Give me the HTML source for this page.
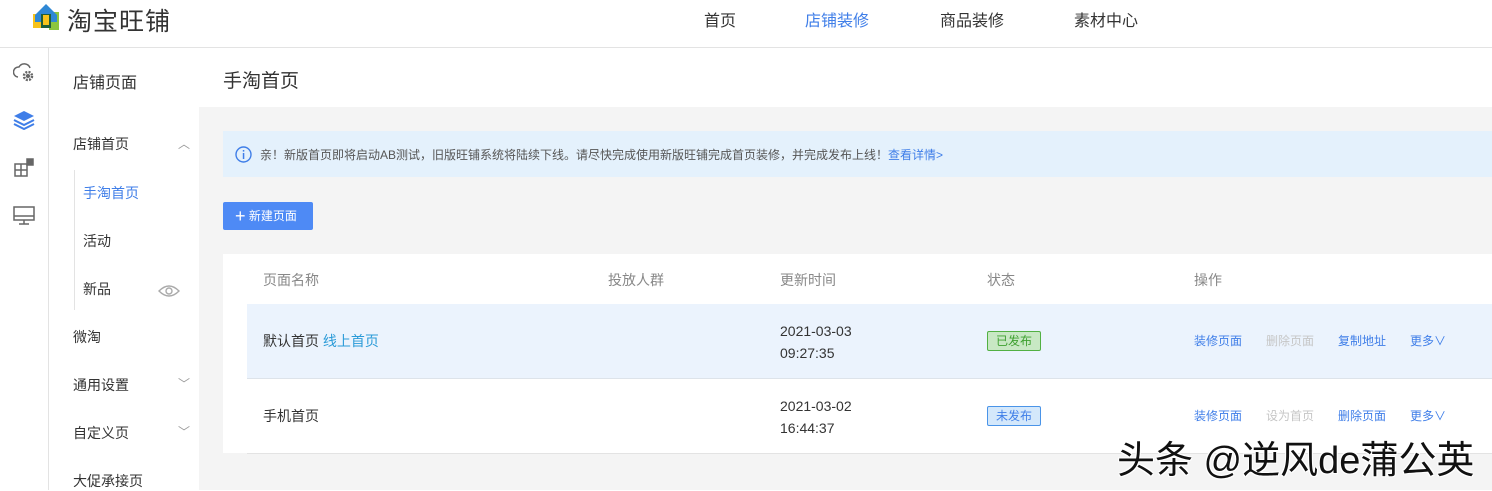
<!DOCTYPE html><html><head><meta charset="utf-8"><style>
*{margin:0;padding:0;box-sizing:border-box}
body{width:1492px;height:490px;overflow:hidden;background:#fff;font-family:"Liberation Sans","Noto Sans CJK SC",sans-serif;color:#333;position:relative;font-size:14px}
.a{position:absolute;white-space:nowrap}
.blue{color:#3f7ee8}
</style></head><body>
<div class="a" style="left:0;top:47px;width:1492px;height:1px;background:#e3e3e3"></div>
<svg class="a" style="left:31px;top:2px" width="30" height="30" viewBox="0 0 30 30">
<rect x="2" y="12" width="10" height="14" fill="#f7c21b"/><rect x="18" y="10" width="10" height="18" fill="#8cc63e"/>
<path d="M4 13 L15 2 L26 13 V20 H4Z" fill="#2f88d5"/><rect x="10" y="12" width="10" height="14" fill="#1f5e3a"/><rect x="12" y="13" width="6" height="10" fill="#f7c21b"/></svg>
<div class="a" style="left:67px;top:2px;font-size:25px;color:#333;letter-spacing:1px">淘宝旺铺</div>
<div class="a" style="left:704px;top:7px;font-size:16px">首页</div>
<div class="a blue" style="left:805px;top:7px;font-size:16px">店铺装修</div>
<div class="a" style="left:940px;top:7px;font-size:16px">商品装修</div>
<div class="a" style="left:1074px;top:7px;font-size:16px">素材中心</div>
<div class="a" style="left:48px;top:48px;width:1px;height:442px;background:#e3e3e3"></div>
<svg class="a" style="left:13px;top:62px" width="22" height="22" viewBox="0 0 22 22" fill="none" stroke="#666" stroke-width="1.5"><path d="M5 15 A5 5 0 0 1 6 5 A6 6 0 0 1 17 6"/><circle cx="15" cy="14" r="4" stroke-dasharray="2 1.2" stroke-width="2.5"/><circle cx="15" cy="14" r="1.3" fill="#666"/></svg>
<svg class="a" style="left:13px;top:110px" width="22" height="20" viewBox="0 0 22 20"><path d="M11 1 L21 6 L11 11 L1 6Z" fill="#3f7ee8"/><path d="M1 10 L11 15 L21 10 M1 14 L11 19 L21 14" stroke="#3f7ee8" stroke-width="2" fill="none"/></svg>
<svg class="a" style="left:14px;top:158px" width="20" height="20" viewBox="0 0 20 20" fill="none" stroke="#666" stroke-width="1.5"><rect x="1" y="6" width="12" height="12"/><path d="M7 6V18M1 12H13"/><rect x="13" y="1" width="6" height="6" fill="#666"/></svg>
<svg class="a" style="left:13px;top:206px" width="22" height="20" viewBox="0 0 22 20" fill="none" stroke="#666" stroke-width="1.5"><rect x="1" y="1" width="20" height="13"/><path d="M1 10H21M11 14V18M6 18H16"/></svg>
<div class="a" style="left:73px;top:69px;font-size:16px">店铺页面</div>
<div class="a" style="left:73px;top:134px">店铺首页</div>
<div class="a" style="left:178px;top:135px;color:#999;font-size:12px">︿</div>
<div class="a" style="left:74px;top:170px;width:1px;height:140px;background:#e3e3e3"></div>
<div class="a blue" style="left:83px;top:183px">手淘首页</div>
<div class="a" style="left:83px;top:231px">活动</div>
<div class="a" style="left:83px;top:279px">新品</div>
<svg class="a" style="left:158px;top:284px" width="22" height="14" viewBox="0 0 22 14" fill="none" stroke="#aaa" stroke-width="1.4"><path d="M1 7 Q11 -3 21 7 Q11 17 1 7Z"/><circle cx="11" cy="7" r="3"/></svg>
<div class="a" style="left:73px;top:327px">微淘</div>
<div class="a" style="left:73px;top:375px">通用设置</div>
<div class="a" style="left:178px;top:375px;color:#999;font-size:12px">﹀</div>
<div class="a" style="left:73px;top:423px">自定义页</div>
<div class="a" style="left:178px;top:423px;color:#999;font-size:12px">﹀</div>
<div class="a" style="left:73px;top:471px">大促承接页</div>
<div class="a" style="left:223px;top:66px;font-size:19px">手淘首页</div>
<div class="a" style="left:199px;top:107px;width:1293px;height:383px;background:#f4f4f4"></div>
<div class="a" style="left:223px;top:131px;width:1269px;height:46px;background:#e4f1fc"></div>
<svg class="a" style="left:235px;top:146px" width="17" height="17" viewBox="0 0 17 17"><circle cx="8.5" cy="8.5" r="7.5" fill="none" stroke="#3f7ee8" stroke-width="1.4"/><rect x="7.8" y="7" width="1.5" height="6" fill="#3f7ee8"/><rect x="7.8" y="4" width="1.5" height="1.6" fill="#3f7ee8"/></svg>
<div class="a" style="left:260px;top:146px;font-size:12px;color:#555">亲！新版首页即将启动AB测试，旧版旺铺系统将陆续下线。请尽快完成使用新版旺铺完成首页装修，并完成发布上线！<span class="blue">查看详情&gt;</span></div>
<div class="a" style="left:223px;top:202px;width:90px;height:28px;background:#4e8af5;border-radius:2px;color:#fff;font-size:12px;line-height:28px;padding-left:12px"><span style="font-size:18px;vertical-align:-2px">+</span> 新建页面</div>
<div class="a" style="left:223px;top:254px;width:1269px;height:199px;background:#fff"></div>
<div class="a" style="left:247px;top:304px;width:1245px;height:74px;background:#ebf3fd"></div>
<div class="a" style="left:247px;top:378px;width:1245px;height:1px;background:#dde3ea"></div>
<div class="a" style="left:247px;top:453px;width:1245px;height:1px;background:#e3e3e3"></div>
<div class="a" style="left:263px;top:270px;color:#888">页面名称</div>
<div class="a" style="left:608px;top:270px;color:#888">投放人群</div>
<div class="a" style="left:780px;top:270px;color:#888">更新时间</div>
<div class="a" style="left:987px;top:270px;color:#888">状态</div>
<div class="a" style="left:1194px;top:270px;color:#888">操作</div>
<div class="a" style="left:263px;top:331px">默认首页 <span style="color:#2b9bd8">线上首页</span></div>
<div class="a" style="left:780px;top:320px;line-height:22px">2021-03-03<br>09:27:35</div>
<div class="a" style="left:987px;top:331px;width:54px;height:20px;border:1px solid #52b043;background:#c8e8c4;border-radius:2px;color:#3ea030;font-size:12px;text-align:center;line-height:18px">已发布</div>
<div class="a blue" style="left:1194px;top:332px;font-size:12px">装修页面</div>
<div class="a" style="left:1266px;top:332px;font-size:12px;color:#c6c6c6">删除页面</div>
<div class="a blue" style="left:1338px;top:332px;font-size:12px">复制地址</div>
<div class="a blue" style="left:1410px;top:332px;font-size:12px">更多∨</div>
<div class="a" style="left:263px;top:406px">手机首页</div>
<div class="a" style="left:780px;top:395px;line-height:22px">2021-03-02<br>16:44:37</div>
<div class="a" style="left:987px;top:406px;width:54px;height:20px;border:1px solid #4a94e8;background:#d4e8fb;border-radius:2px;color:#3f7ee8;font-size:12px;text-align:center;line-height:18px">未发布</div>
<div class="a blue" style="left:1194px;top:407px;font-size:12px">装修页面</div>
<div class="a" style="left:1266px;top:407px;font-size:12px;color:#c6c6c6">设为首页</div>
<div class="a blue" style="left:1338px;top:407px;font-size:12px">删除页面</div>
<div class="a blue" style="left:1410px;top:407px;font-size:12px">更多∨</div>
<div class="a" style="left:1117px;top:429px;font-size:38px;color:#111;text-shadow:-1px -1px 0 #fff,1px 1px 0 #fff,1px -1px 0 #fff,-1px 1px 0 #fff">头条 @逆风de蒲公英</div>
</body></html>
